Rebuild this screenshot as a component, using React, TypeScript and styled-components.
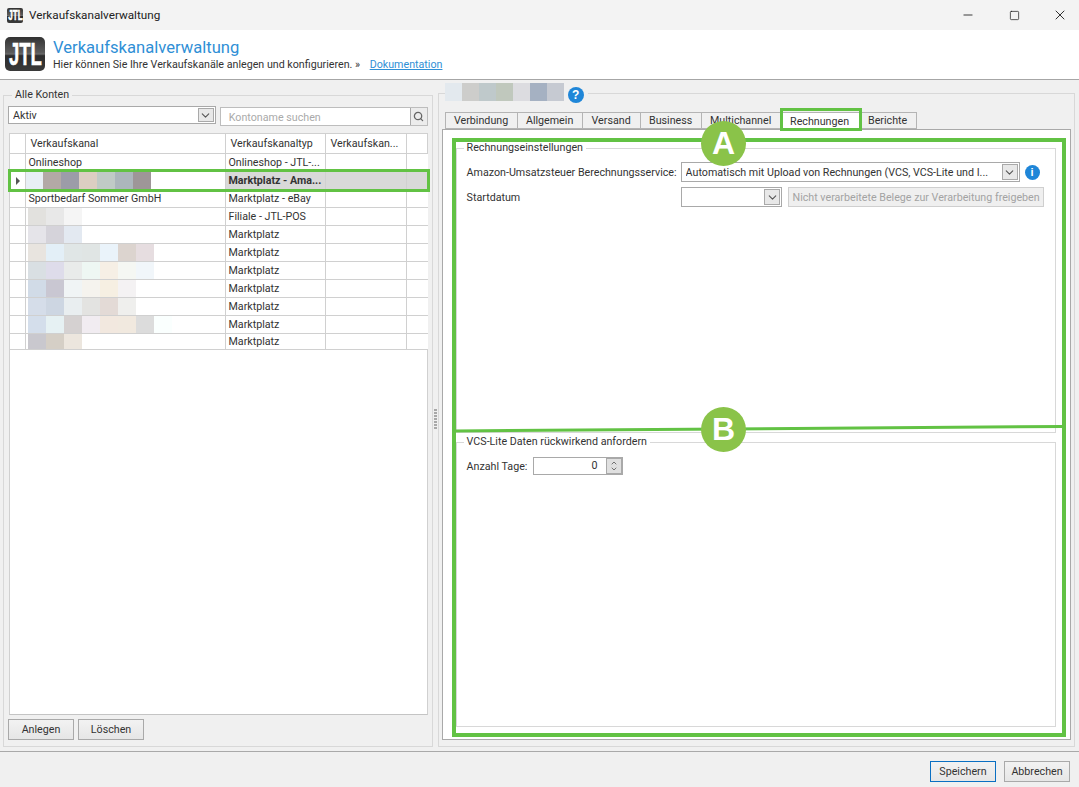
import React from 'react'
import styled, { createGlobalStyle } from 'styled-components'
import { ChevronDown, ChevronUp, Minus, Search, Square, X } from 'lucide-react'

const GlobalStyle = createGlobalStyle`
html, body {
  margin: 0;
  padding: 0;
  width: 1079px;
  height: 787px;
  overflow: hidden;
  background: #f0f0f0;
}
* { box-sizing: border-box; }
body {
  font-family: Roboto, "Liberation Sans", sans-serif;
  font-size: 10.7px;
  color: #333;
}
`

const Page = styled.div`
position: relative;
width: 1079px;
height: 787px;
overflow: hidden;
display: flex;
flex-direction: column;
`

const TitleBar = styled.div`
height: 30px;
background: #f3f3f3;
display: flex;
align-items: center;
padding-left: 7px;
gap: 6px;
font-size: 11.7px;
color: #222;
`
const WindowButtons = styled.div`
margin-left: auto;
margin-right: -4px;
display: flex;
`
const WindowButton = styled.div`
width: 46px;
height: 30px;
display: flex;
align-items: center;
justify-content: center;
color: #111;
`
const LogoBox = styled.div<{ $w: number; $h: number; $font: number }>`
width: ${p => p.$w}px;
height: ${p => p.$h}px;
border-radius: ${p => (p.$w > 20 ? 5 : 2)}px;
background: linear-gradient(#333 0%, #5a5a5a 45%, #6a6a6a 50%, #2c2c2c 55%, #3a3a3a 100%);
color: #fff;
font-family: "Liberation Sans", sans-serif;
font-weight: 700;
font-size: ${p => p.$font}px;
line-height: ${p => p.$h}px;
display: flex;
justify-content: center;
overflow: hidden;
flex: none;
span {
  flex: none;
  transform: scaleX(0.58);
  -webkit-text-stroke: 0.5px #fff;
}
`

const Header = styled.div`
height: 50px;
background: #fff;
border-bottom: 1px solid #a6a6a6;
display: flex;
align-items: flex-start;
padding: 7px 0 0 5px;
gap: 8px;
`
const HeaderText = styled.div`
display: flex;
flex-direction: column;
padding-top: 1px;
`
const HeaderTitle = styled.div`
color: #2f8fd6;
font-size: 16.6px;
line-height: 20px;
`
const HeaderSub = styled.div`
line-height: 14px;
color: #333;
a {
  color: #2f8fd6;
  margin-left: 7px;
  text-decoration: underline;
}
`

const Main = styled.div`
flex: 1;
display: flex;
padding: 0 4px 4px 3px;
`
const Splitter = styled.div`
width: 5px;
display: flex;
flex-direction: column;
align-items: center;
justify-content: flex-start;
gap: 1px;
padding-top: 329px;
i {
  width: 3px;
  height: 2px;
  background: #a8a8a8;
}
`

const Group = styled.fieldset<{ $top?: number }>`
margin: ${p => p.$top ?? 0}px 0 0 0;
padding: 0;
min-width: 0;
border: 1px solid #d8d8d8;
display: flex;
flex-direction: column;
`
const GroupLegend = styled.legend`
padding: 0 3px;
margin-left: 4px;
line-height: 14px;
color: #333;
`
const InnerLegend = styled(GroupLegend)`
margin-left: -3px;
`
const AccountLegend = styled.legend`
padding: 0 4px 0 0;
margin-left: 3px;
height: 20px;
display: flex;
align-items: flex-start;
`

const LeftGroup = styled(Group)`
width: 430px;
padding: 4px 4px 6px 4px;
`
const RightGroup = styled(Group)`
width: 638px;
padding: 9px 3px 6px 3px;
`

const FilterRow = styled.div`
display: flex;
gap: 4px;
align-items: flex-start;
`
const ComboBox = styled.div<{ $w: number; $h?: number }>`
width: ${p => p.$w}px;
height: ${p => p.$h ?? 18}px;
background: #fff;
border: 1px solid #a9a9a9;
display: flex;
align-items: center;
padding-left: 4px;
color: #333;
white-space: nowrap;
overflow: hidden;
`
const ComboText = styled.span`
flex: 1;
min-width: 0;
overflow: hidden;
`
const ComboArrow = styled.div`
width: 16px;
align-self: stretch;
margin: 1px;
background: #e8e8e8;
border: 1px solid #a9a9a9;
display: flex;
align-items: center;
justify-content: center;
color: #555;
flex: none;
`
const SearchBox = styled.div`
width: 208px;
height: 19px;
margin-top: 1px;
padding: 1px 0 0 8px;
background: #fff;
border: 1px solid #bdbdbd;
display: flex;
align-items: center;
color: #aaa;
`
const SearchButton = styled.div`
margin: -1px 0 0 auto;
width: 17px;
height: 17px;
background: #ececec;
border-left: 1px solid #a9a9a9;
display: flex;
align-items: center;
justify-content: center;
color: #666;
svg { stroke-width: 2.8; }
`

const GridWrap = styled.div`
flex: 1;
margin: 7px 0 0 1px;
background: #fff;
border: 1px solid #d0d0d0;
border-bottom-color: #c4c4c4;
`
const GridTable = styled.table`
width: 418px;
table-layout: fixed;
border-collapse: collapse;
`
const HeadCell = styled.th`
height: 19px;
padding: 0 0 0 5px;
border-right: 1px solid #d0d0d0;
border-bottom: 1px solid #d0d0d0;
font-weight: 400;
text-align: left;
color: #333;
white-space: nowrap;
overflow: hidden;
&:last-child { border-right: 0; }
`
const Row = styled.tr<{ $selected?: boolean }>`
td:not(:nth-child(-n + 2)) {
  background: ${p => (p.$selected ? '#d9d9d9' : '#fff')};
  font-weight: ${p => (p.$selected ? 700 : 400)};
}
&:last-child td {
  height: 16px;
}
`
const Cell = styled.td`
height: 18px;
padding: 1px 0 0 3px;
border-right: 1px solid #d0d0d0;
border-bottom: 1px solid #d0d0d0;
color: #333;
white-space: nowrap;
overflow: hidden;
line-height: 14px;
&:last-child { border-right: 0; }
`
const RowMarker = styled.div`
width: 0;
height: 0;
margin-left: 3px;
border-left: 4px solid #555;
border-top: 4px solid transparent;
border-bottom: 4px solid transparent;
`
const Mosaic = styled.div<{ $offset?: number; $h?: number; $flush?: boolean }>`
display: flex;
height: ${p => p.$h ?? 17}px;
margin-left: ${p => p.$offset ?? 0}px;
margin-top: ${p => (p.$flush ? 0 : -1)}px;
`
const Tile = styled.div<{ $c: string; $w?: number }>`
width: ${p => p.$w ?? 18}px;
height: 100%;
background: ${p => p.$c};
flex: none;
`

const ButtonRow = styled.div`
display: flex;
gap: 4px;
margin-top: 4px;
`
const Button = styled.div<{ $w: number; $primary?: boolean }>`
width: ${p => p.$w}px;
height: 21px;
background: linear-gradient(#f2f2f2, #e6e6e6);
border: 1px solid ${p => (p.$primary ? '#0a6fc2' : '#a9a9a9')};
display: flex;
align-items: center;
justify-content: center;
color: #333;
`

const Tabs = styled.div`
display: flex;
height: 17px;
margin-left: 3px;
`
const Tab = styled.div<{ $w: number; $active?: boolean }>`
width: ${p => p.$w}px;
height: ${p => (p.$active ? 18 : 17)}px;
margin-bottom: -1px;
background: ${p => (p.$active ? '#fff' : '#f0f0f0')};
border: 1px solid #b4b4b4;
border-left-width: 0;
border-bottom: ${p => (p.$active ? '0' : '1px solid #b4b4b4')};
display: flex;
align-items: center;
justify-content: center;
color: #333;
z-index: 1;
&:first-child { border-left-width: 1px; }
`
const TabPane = styled.div`
flex: 1;
background: #fff;
border: 1px solid #a9a9a9;
padding: 11px 14px 12px 13px;
display: flex;
flex-direction: column;
gap: 2px;
`
const InnerGroup = styled(Group)`
flex: 1;
padding: 7px 11px 0 10px;
gap: 5px;
`
const FormRow = styled.div`
display: flex;
align-items: center;
height: 20px;
`
const FormLabel = styled.div<{ $w: number }>`
width: ${p => p.$w}px;
flex: none;
white-space: nowrap;
color: #333;
`
const RoundIcon = styled.div<{ $size: number; $left: number; $top?: number }>`
width: ${p => p.$size}px;
height: ${p => p.$size}px;
margin: ${p => p.$top ?? 0}px 0 0 ${p => p.$left}px;
border-radius: 50%;
background: #1f86d8;
color: #fff;
font-family: "Liberation Sans", sans-serif;
font-weight: 700;
font-size: ${p => p.$size - 4}px;
line-height: ${p => p.$size}px;
text-align: center;
flex: none;
`
const DisabledButton = styled.div`
width: 257px;
height: 20px;
margin-left: 6px;
background: #efefef;
border: 1px solid #cfcfcf;
color: #a3a3a3;
display: flex;
align-items: center;
justify-content: center;
white-space: nowrap;
`
const SpinBox = styled.div`
width: 90px;
height: 18px;
margin-top: -1px;
background: #fff;
border: 1px solid #a9a9a9;
display: flex;
align-items: center;
justify-content: flex-end;
color: #333;
`
const SpinButtons = styled.div`
width: 16px;
height: 16px;
margin-left: 8px;
background: #e0e0e0;
border: 1px solid #a9a9a9;
display: flex;
flex-direction: column;
align-items: center;
justify-content: center;
color: #555;
svg { flex: none; margin: -1px 0; }
`

const Footer = styled.div`
height: 36px;
border-top: 1px solid #a9a9a9;
display: flex;
justify-content: flex-end;
align-items: flex-start;
gap: 8px;
padding: 9px 9px 0 0;
`

// green marks laid over the screenshot
const Mark = styled.div<{ $x: number; $y: number; $w: number; $h: number; $t?: number }>`
position: absolute;
left: ${p => p.$x}px;
top: ${p => p.$y}px;
width: ${p => p.$w}px;
height: ${p => p.$h}px;
border: ${p => p.$t ?? 3}px solid #62c244;
pointer-events: none;
z-index: 5;
`
const Badge = styled.div<{ $y: number }>`
position: absolute;
left: 701px;
top: ${p => p.$y}px;
width: 45px;
height: 45px;
border-radius: 50%;
background: #8ac349;
color: #fff;
font-family: "Liberation Sans", sans-serif;
font-weight: 700;
font-size: 32px;
line-height: 45px;
text-align: center;
z-index: 6;
`
const MarkLine = styled.svg`
position: absolute;
left: 455px;
top: 424px;
z-index: 5;
`

const tile = (s: string) => s.split(' ').map(c => '#' + c)

const accounts = [
  { name: 'Onlineshop', type: 'Onlineshop - JTL-...' },
  {
    tiles: tile('e8eff5 b3a9a6 9c9ca8 dccec2 c0cac6 acb6bc 9e9698'),
    type: 'Marktplatz - Ama...',
    selected: true,
  },
  { name: 'Sportbedarf Sommer GmbH', type: 'Marktplatz - eBay' },
  { tiles: tile('e2e1de e8e8e8 f5f5f5'), type: 'Filiale - JTL-POS' },
  { tiles: tile('e5e4e9 d5d3da e3e9f1'), type: 'Marktplatz' },
  { tiles: tile('e8e4df e3eff7 e0e6e6 e0e5e4 eaf3fa dcd4cf e6dde0'), type: 'Marktplatz' },
  { tiles: tile('d9dfe3 dedcea e9ebea eef7f3 f6efe5 f5f7f3 f1f6fa'), type: 'Marktplatz' },
  { tiles: tile('d1dbe7 c9c7d2 f0f4f5 f5f3ee f6efe2 f4f2f3'), type: 'Marktplatz' },
  { tiles: tile('d5dde9 cdd6e2 e9eef0 e3e3e1 e3dad6 efefed'), type: 'Marktplatz' },
  { tiles: tile('d4deeb e6f1f3 d5d1d1 f1ecf1 f2e8df f1e9df dcdcdc fafffe'), type: 'Marktplatz' },
  { tiles: tile('c9c8ce d5cfc6 ece6de'), type: 'Marktplatz', last: true },
]

const tabs = [
  { label: 'Verbindung', w: 73 },
  { label: 'Allgemein', w: 65 },
  { label: 'Versand', w: 58 },
  { label: 'Business', w: 61 },
  { label: 'Multichannel', w: 79 },
  { label: 'Rechnungen', w: 79, active: true },
  { label: 'Berichte', w: 57 },
]

const App = () => {
  return (
    <Page>
      <GlobalStyle />
      <TitleBar>
        <LogoBox $w={16} $h={15} $font={14}><span>JTL</span></LogoBox>
        Verkaufskanalverwaltung
        <WindowButtons>
          <WindowButton><Minus size={14} strokeWidth={1.4} /></WindowButton>
          <WindowButton><Square size={11} strokeWidth={1.5} /></WindowButton>
          <WindowButton><X size={16} strokeWidth={1.3} /></WindowButton>
        </WindowButtons>
      </TitleBar>

      <Header>
        <LogoBox $w={40} $h={34} $font={32}><span>JTL</span></LogoBox>
        <HeaderText>
          <HeaderTitle>Verkaufskanalverwaltung</HeaderTitle>
          <HeaderSub>
            Hier können Sie Ihre Verkaufskanäle anlegen und konfigurieren. » <a>Dokumentation</a>
          </HeaderSub>
        </HeaderText>
      </Header>

      <Main>
        <LeftGroup $top={8}>
          <GroupLegend>Alle Konten</GroupLegend>
          <FilterRow>
            <ComboBox $w={208}>
              <ComboText>Aktiv</ComboText>
              <ComboArrow><ChevronDown size={13} /></ComboArrow>
            </ComboBox>
            <SearchBox>
              Kontoname suchen
              <SearchButton><Search size={11} /></SearchButton>
            </SearchBox>
          </FilterRow>
          <GridWrap>
            <GridTable>
              <colgroup>
                <col width={15} />
                <col width={200} />
                <col width={100} />
                <col width={81} />
                <col width={22} />
              </colgroup>
              <thead>
                <tr>
                  <HeadCell />
                  <HeadCell>Verkaufskanal</HeadCell>
                  <HeadCell>Verkaufskanaltyp</HeadCell>
                  <HeadCell>Verkaufskan...</HeadCell>
                  <HeadCell />
                </tr>
              </thead>
              <tbody>
                {accounts.map((a, i) => (
                  <Row key={i} $selected={a.selected}>
                    <Cell>{a.selected && <RowMarker />}</Cell>
                    <Cell>
                      {a.tiles ? (
                        <Mosaic $offset={a.selected ? -4 : -1} $h={a.last ? 15 : 17}>
                          {a.tiles.map(c => <Tile key={c} $c={c} />)}
                        </Mosaic>
                      ) : a.name}
                    </Cell>
                    <Cell>{a.type}</Cell>
                    <Cell />
                    <Cell />
                  </Row>
                ))}
              </tbody>
            </GridTable>
          </GridWrap>
          <ButtonRow>
            <Button $w={66}>Anlegen</Button>
            <Button $w={66}>Löschen</Button>
          </ButtonRow>
        </LeftGroup>

        <Splitter>
          {Array.from({ length: 7 }).map((_, i) => <i key={i} />)}
        </Splitter>

        <RightGroup $top={3}>
          <AccountLegend>
            <Mosaic $h={18} $flush>
              {tile('e3e9ee cdcdcb bfc9cb c0c8bd dcdce0 a5b1c2 c6cad2').map(c => <Tile key={c} $c={c} $w={17} />)}
            </Mosaic>
            <RoundIcon $size={16} $left={4} $top={4}>?</RoundIcon>
          </AccountLegend>
          <Tabs>
            {tabs.map(t => (
              <Tab key={t.label} $w={t.w} $active={t.active}>{t.label}</Tab>
            ))}
          </Tabs>
          <TabPane>
            <InnerGroup>
              <InnerLegend>Rechnungseinstellungen</InnerLegend>
              <FormRow>
                <FormLabel $w={214}>Amazon-Umsatzsteuer Berechnungsservice:</FormLabel>
                <ComboBox $w={339} $h={20}>
                  <ComboText>Automatisch mit Upload von Rechnungen (VCS, VCS-Lite und I...</ComboText>
                  <ComboArrow><ChevronDown size={13} /></ComboArrow>
                </ComboBox>
                <RoundIcon $size={15} $left={5}>i</RoundIcon>
              </FormRow>
              <FormRow>
                <FormLabel $w={214}>Startdatum</FormLabel>
                <ComboBox $w={102} $h={20}>
                  <ComboText />
                  <ComboArrow><ChevronDown size={13} /></ComboArrow>
                </ComboBox>
                <DisabledButton>Nicht verarbeitete Belege zur Verarbeitung freigeben</DisabledButton>
              </FormRow>
            </InnerGroup>
            <InnerGroup>
              <InnerLegend>VCS-Lite Daten rückwirkend anfordern</InnerLegend>
              <FormRow>
                <FormLabel $w={66}>Anzahl Tage:</FormLabel>
                <SpinBox>
                  0
                  <SpinButtons>
                    <ChevronUp size={8} strokeWidth={2.4} />
                    <ChevronDown size={8} strokeWidth={2.4} />
                  </SpinButtons>
                </SpinBox>
              </FormRow>
            </InnerGroup>
          </TabPane>
        </RightGroup>
      </Main>

      <Footer>
        <Button $w={66} $primary>Speichern</Button>
        <Button $w={66}>Abbrechen</Button>
      </Footer>

      <Mark $x={8} $y={169} $w={422} $h={23} />
      <Mark $x={780} $y={108} $w={82} $h={23} />
      <Mark $x={452} $y={138} $w={614} $h={599} $t={4} />
      <MarkLine width="610" height="10">
        <line x1="0" y1="7" x2="608" y2="2.5" stroke="#62c244" strokeWidth="3" />
      </MarkLine>
      <Badge $y={121}>A</Badge>
      <Badge $y={407}>B</Badge>
    </Page>
  )
}

export default App
